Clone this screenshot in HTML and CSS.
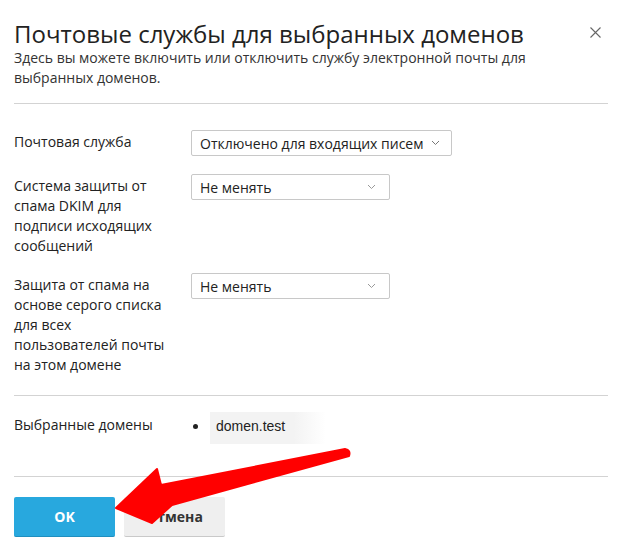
FILE: index.html
```html
<!DOCTYPE html>
<html>
  <head>
    <meta charset="utf-8" />
    <title>Почтовые службы</title>
    <link rel="stylesheet" href="styles.css">
  </head>
  <body>
    <div class="dialog">
      <div class="dialog-header">
        <h1>Почтовые службы для выбранных доменов</h1>
        <button class="close" title="Закрыть">
          <svg width="11" height="11" viewBox="0 0 11 11"><path d="M0.5 0.5L10.5 10.5M10.5 0.5L0.5 10.5" stroke="#666" stroke-width="1.1" fill="none"/></svg>
        </button>
      </div>
      <p class="hint">Здесь вы можете включить или отключить службу электронной почты для выбранных доменов.</p>

      <div class="section form">
        <div class="row">
          <div class="label">Почтовая служба</div>
          <div class="select wide">
            <span>Отключено для входящих писем</span>
            <svg class="chev" width="9" height="6" viewBox="0 0 9 6"><path d="M1 1L4.5 4.5L8 1" stroke="#777" stroke-width="1" fill="none"/></svg>
          </div>
        </div>
        <div class="row">
          <div class="label">Система защиты от спама DKIM для подписи исходящих сообщений</div>
          <div class="select">
            <span>Не менять</span>
            <svg class="chev" width="9" height="6" viewBox="0 0 9 6"><path d="M1 1L4.5 4.5L8 1" stroke="#999" stroke-width="1" fill="none"/></svg>
          </div>
        </div>
        <div class="row">
          <div class="label">Защита от спама на основе серого списка для всех пользователей почты на этом домене</div>
          <div class="select">
            <span>Не менять</span>
            <svg class="chev" width="9" height="6" viewBox="0 0 9 6"><path d="M1 1L4.5 4.5L8 1" stroke="#999" stroke-width="1" fill="none"/></svg>
          </div>
        </div>
      </div>

      <div class="section domains">
        <div class="row">
          <div class="label">Выбранные домены</div>
          <div class="domain-item">
            <span class="bullet"></span>
            <span class="domain">domen.test</span>
          </div>
        </div>
      </div>

      <div class="buttons">
        <button class="btn primary">OK</button>
        <button class="btn">Отмена</button>
      </div>
    </div>

    <svg class="arrow" width="624" height="551" viewBox="0 0 624 551">
      <path d="M116 508 L157 469 L161 485 L345 449 Q351 450 349 456 L172 505 L152 523 Z" fill="#ff0000" stroke="#ff0000" stroke-width="2" stroke-linejoin="round"/>
    </svg>
  </body>
</html>
```

FILE: styles.css
```css
body {
  margin: 0;
  background: #fff;
  font-family: "Open Sans", "Noto Sans", sans-serif;
  color: #222;
}
.dialog {
  width: 594px;
  padding: 0 16px 0 14px;
}
.dialog-header {
  display: flex;
  justify-content: space-between;
  align-items: flex-start;
  padding-top: 20px;
}
h1 {
  margin: 0;
  font-size: 24px;
  font-weight: 400;
  line-height: 28px;
  color: #222;
}
.close {
  border: none;
  background: none;
  padding: 0;
  margin: 7px 7px 0 0;
  width: 11px;
  height: 11px;
  display: flex;
}
.hint {
  margin: 0;
  font-size: 14px;
  line-height: 20px;
  color: #333;
  padding-bottom: 15px;
  border-bottom: 1px solid #d3d3d3;
}
.section {
  border-bottom: 1px solid #d3d3d3;
}
.form {
  display: flex;
  flex-direction: column;
  gap: 17px;
  padding: 26px 0 20px;
}
.form .row:nth-child(2) {
  margin-top: 1px;
}
.row {
  display: grid;
  grid-template-columns: 155px auto;
  column-gap: 22px;
  align-items: start;
}
.label {
  font-size: 14px;
  line-height: 20px;
  padding-top: 2px;
  color: #222;
}
.select {
  width: 199px;
  height: 26px;
  box-sizing: border-box;
  border: 1px solid #c8c8c8;
  border-radius: 2px;
  display: flex;
  align-items: center;
  justify-content: space-between;
  padding: 0 13px 0 8px;
  font-size: 14px;
  color: #222;
}
.select.wide {
  width: 261px;
  padding-right: 11px;
}
.domains {
  padding: 16px 0 32px;
}
.domains .label {
  padding-top: 3px;
}
.domain-item {
  display: flex;
  align-items: flex-start;
  padding-left: 2px;
}
.bullet {
  width: 5px;
  height: 5px;
  border-radius: 50%;
  background: #222;
  margin: 12px 12px 0 0;
}
.domain {
  font-family: "Liberation Sans", Arial, sans-serif;
  font-size: 14px;
  line-height: 20px;
  padding: 4px 0 8px 6px;
  width: 110px;
  background: linear-gradient(to right, #f3f3f3 72%, #fff);
  color: #222;
}
.buttons {
  display: flex;
  gap: 9px;
  padding-top: 20px;
}
.btn {
  width: 101px;
  height: 40px;
  border: none;
  border-bottom: 1px solid #c9c9c9;
  border-radius: 2px;
  background: #efefef;
  font-family: inherit;
  font-size: 14px;
  font-weight: 700;
  color: #333;
}
.btn.primary {
  background: #28a8de;
  border-bottom-color: #1f8fbf;
  color: #fff;
}
.arrow {
  position: absolute;
  left: 0;
  top: 0;
  pointer-events: none;
}
```
